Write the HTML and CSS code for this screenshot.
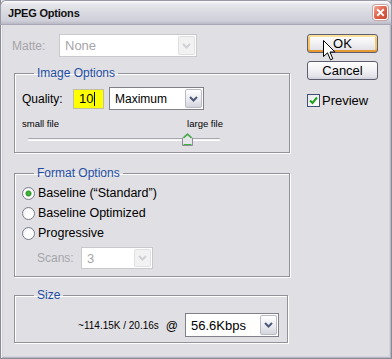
FILE: index.html
```html
<!DOCTYPE html>
<html lang="en">
<head>
    <meta charset="UTF-8">
    <title>JPEG Options</title>
    <link rel="stylesheet" href="styles.css">
</head>
<body>
    <div class="window">
        <div class="titlebar">
            <span class="title">JPEG Options</span>
            <span class="close-button">
                <svg width="15" height="15" viewBox="0 0 15 15"><path d="M4.5 4.5 L10.5 10.5 M10.5 4.5 L4.5 10.5" stroke="#fff" stroke-width="2.2" stroke-linecap="square"/></svg>
            </span>
        </div>

        <div class="dialog">
            <div class="main">
                <div class="matte-row">
                    <span class="label disabled">Matte:</span>
                    <div class="select select-matte disabled">
                        <span class="value">None</span>
                        <span class="drop"><svg width="9" height="6" viewBox="0 0 9 6"><path d="M1 1 L4.5 4.5 L8 1" fill="none" stroke="#cfd0d4" stroke-width="2"/></svg></span>
                    </div>
                </div>

                <fieldset class="group image-options">
                    <legend>Image Options</legend>
                    <div class="quality-row">
                        <span class="label">Quality:</span>
                        <div class="quality-input">10<span class="caret"></span></div>
                        <div class="select select-quality">
                            <span class="value">Maximum</span>
                            <span class="drop"><svg width="9" height="6" viewBox="0 0 9 6"><path d="M1 1 L4.5 4.5 L8 1" fill="none" stroke="#4a5a78" stroke-width="2"/></svg></span>
                        </div>
                    </div>
                    <div class="file-labels">
                        <span>small file</span>
                        <span>large file</span>
                    </div>
                    <div class="slider">
                        <div class="track"></div>
                        <svg class="thumb" width="11" height="13" viewBox="0 0 11 13">
                            <path d="M0.5 5 L5.5 0.5 L10.5 5 L10.5 12.5 L0.5 12.5 Z" fill="#e6e6ea" stroke="#8c8c9c"/>
                            <path d="M1.5 5 L5.5 1.5 L9.5 5" fill="none" stroke="#3fb43c" stroke-width="1.4"/>
                            <path d="M1.5 11.5 L9.5 11.5" stroke="#3fb43c" stroke-width="1"/>
                        </svg>
                    </div>
                </fieldset>

                <fieldset class="group format-options">
                    <legend>Format Options</legend>
                    <div class="radio-row">
                        <span class="radio checked"></span>
                        <span>Baseline (“Standard”)</span>
                    </div>
                    <div class="radio-row">
                        <span class="radio"></span>
                        <span>Baseline Optimized</span>
                    </div>
                    <div class="radio-row">
                        <span class="radio"></span>
                        <span>Progressive</span>
                    </div>
                    <div class="scans-row">
                        <span class="label disabled">Scans:</span>
                        <div class="select select-scans disabled">
                            <span class="value">3</span>
                            <span class="drop"><svg width="9" height="6" viewBox="0 0 9 6"><path d="M1 1 L4.5 4.5 L8 1" fill="none" stroke="#cfd0d4" stroke-width="2"/></svg></span>
                        </div>
                    </div>
                </fieldset>

                <fieldset class="group size-options">
                    <legend>Size</legend>
                    <div class="size-row">
                        <span class="size-text">~114.15K / 20.16s</span>
                        <span class="at">@</span>
                        <div class="select select-speed">
                            <span class="value">56.6Kbps</span>
                            <span class="drop"><svg width="9" height="6" viewBox="0 0 9 6"><path d="M1 1 L4.5 4.5 L8 1" fill="none" stroke="#4a5a78" stroke-width="2"/></svg></span>
                        </div>
                    </div>
                </fieldset>
            </div>

            <div class="side">
                <button class="button hover">OK</button>
                <button class="button">Cancel</button>
                <label class="check-row">
                    <span class="checkbox">
                        <svg width="11" height="11" viewBox="0 0 11 11"><path d="M2 5.5 L4.5 8 L9 2.5" fill="none" stroke="#21a121" stroke-width="2"/></svg>
                    </span>
                    <span>Preview</span>
                </label>
            </div>
        </div>

        <!-- mouse pointer over the OK button -->
        <svg class="cursor" width="13" height="21" viewBox="0 0 13 21">
            <path d="M0.5 0.5 L0.5 16.5 L4.5 12.8 L7.5 19.8 L9.8 18.8 L7 12 L12 12 Z" fill="#fff" stroke="#000" stroke-width="1"/>
        </svg>
    </div>
</body>
</html>
```

FILE: styles.css
```css
* {
    margin: 0;
    padding: 0;
    box-sizing: border-box;
}

body {
    font-family: 'Liberation Sans', Arial, sans-serif;
    font-size: 12px;
    color: #000;
    background: #e0dfe3;
}

.window {
    position: relative;
    width: 392px;
    height: 359px;
    background: #e0dfe3;
    border: 1px solid #8a8a96;
    border-top: none;
    box-shadow: inset 1px 0 0 #f4f4f6, inset -1px 0 0 #b8b8c2, inset 0 -1px 0 #b8b8c2, inset 2px 0 0 #d4d4dc, inset -2px 0 0 #d4d4dc, inset 0 -2px 0 #d4d4dc;
}

.titlebar {
    height: 25px;
    margin: 0 -1px;
    display: flex;
    align-items: center;
    justify-content: space-between;
    padding: 0 3px 0 7px;
    background: linear-gradient(#fbfbfc 0%, #e6e6ec 15%, #d9d9e1 50%, #d0d0da 85%, #babac6 100%);
    border: 1px solid #9a9aa6;
    border-bottom-color: #a8a8b4;
    border-radius: 6px 6px 0 0;
}

.title {
    font-weight: bold;
    font-size: 11px;
    letter-spacing: -0.2px;
    color: #111;
}

.close-button {
    width: 15px;
    height: 15px;
    border: 1px solid #fff;
    border-radius: 3px;
    background: linear-gradient(135deg, #f2a898 0%, #e0664f 45%, #c9452d 100%);
    box-shadow: 0 0 0 1px #c9a6a6;
    display: flex;
    align-items: center;
    justify-content: center;
}

.close-button svg {
    width: 13px;
    height: 13px;
}

.dialog {
    display: flex;
    padding: 9px 0 0 11px;
}

.main {
    width: 279px;
}

.side {
    margin-left: 16px;
    width: 71px;
    display: flex;
    flex-direction: column;
}

.label.disabled,
.disabled .value {
    color: #a6a5aa;
}

.matte-row {
    height: 23px;
    display: flex;
    align-items: center;
}

.matte-row .label {
    width: 47px;
}

/* combo boxes */
.select {
    display: flex;
    align-items: stretch;
    background: #fff;
    border: 1px solid #a5a6ad;
    padding: 1px;
}

.select .value {
    flex: 1;
    display: flex;
    align-items: center;
    padding-left: 4px;
}

.select .drop {
    width: 17px;
    display: flex;
    align-items: center;
    justify-content: center;
    border: 1px solid #b9bbc6;
    border-radius: 2px;
    background: linear-gradient(#ffffff, #e9e9ef 60%, #d3d4dd);
}

.select.disabled {
    border-color: #c9c9cc;
}

.select.disabled .drop {
    border-color: #e0e0e2;
    background: #f2f2f3;
}

.select-matte {
    width: 138px;
    height: 23px;
    font-size: 13px;
}

/* group boxes */
.group {
    margin: 0 0 0 2px;
    width: 276px;
    border: 1px solid #92929a;
    box-shadow: inset 1px 1px 0 #fff, 1px 1px 0 #fff;
    padding: 0 8px 0 7px;
}

.group legend {
    margin-left: 12px;
    padding: 0 3px;
    line-height: 15px;
    color: #1f4ea3;
    font-size: 12px;
}

.image-options {
    margin-top: 9px;
    padding-top: 6px;
    padding-bottom: 6px;
}

.quality-row {
    height: 23px;
    display: flex;
    align-items: center;
}

.quality-row .label {
    width: 51px;
}

.quality-input {
    width: 31px;
    height: 20px;
    background: #ffff00;
    border: 1px solid #c0c0a0;
    display: flex;
    align-items: center;
    padding-left: 5px;
    font-size: 13px;
}

.caret {
    width: 1px;
    height: 14px;
    background: #000;
    margin-left: 1px;
}

.select-quality {
    margin-left: 5px;
    width: 95px;
    height: 23px;
    border-color: #7f8088;
}

.file-labels {
    margin-top: 8px;
    display: flex;
    justify-content: space-between;
    width: 201px;
    font-size: 9.5px;
    line-height: 12px;
}

.slider {
    position: relative;
    margin: 2px 0 0 6px;
    width: 192px;
    height: 14px;
}

.track {
    position: absolute;
    left: 0;
    right: 0;
    top: 6px;
    height: 3px;
    border-top: 1px solid #a8a8b0;
    border-bottom: 1px solid #fff;
    background: #f4f4f6;
    border-radius: 1px;
}

.thumb {
    position: absolute;
    left: 154px;
    top: 1px;
}

.format-options {
    margin-top: 13px;
    padding-top: 2px;
    padding-bottom: 7px;
}

.radio-row {
    height: 20px;
    display: flex;
    align-items: center;
    gap: 3px;
    font-size: 12.5px;
}

.radio {
    width: 13px;
    height: 13px;
    border-radius: 50%;
    border: 1px solid #7b7f8c;
    background: radial-gradient(circle at 60% 60%, #ffffff 40%, #e4e4ea 100%);
}

.radio.checked {
    background: radial-gradient(circle, #4ec04a 0, #2b9a28 2.5px, #ffffff 3.5px, #e4e4ea 100%);
}

.scans-row {
    margin-top: 4px;
    padding-left: 15px;
    height: 22px;
    display: flex;
    align-items: center;
}

.scans-row .label {
    width: 44px;
}

.select-scans {
    width: 72px;
    height: 22px;
    font-size: 13px;
}

.size-options {
    margin-top: 11px;
    width: 274px;
    padding-top: 10px;
    padding-bottom: 5px;
}

.size-row {
    height: 24px;
    display: flex;
    align-items: center;
    justify-content: flex-end;
}

.size-text {
    font-size: 10px;
}

.at {
    margin: 2px 7px 0 7px;
    font-size: 12px;
}

.select-speed {
    width: 94px;
    height: 24px;
    font-size: 13px;
    border-color: #7f8088;
}

/* buttons */
.button {
    height: 19px;
    font-family: inherit;
    font-size: 13px;
    color: #000;
    border: 1px solid #5d5e6f;
    border-radius: 3px;
    background: linear-gradient(#ffffff, #f1f1f4 50%, #e2e2e8 85%, #cfd0d9);
}

.button.hover {
    box-shadow: inset 0 2px 0 #fce29a, inset 0 -2px 0 #e79a32, inset 2px 0 0 #f7c766, inset -2px 0 0 #f7c766;
}

.button + .button {
    margin-top: 8px;
}

.check-row {
    margin-top: 13px;
    height: 14px;
    display: flex;
    align-items: center;
    gap: 2px;
    font-size: 13px;
}

.checkbox {
    width: 13px;
    height: 13px;
    border: 1px solid #3f4f75;
    background: linear-gradient(135deg, #e8e8ec, #ffffff);
    display: flex;
    align-items: center;
    justify-content: center;
}

.cursor {
    position: absolute;
    left: 322px;
    top: 40px;
}
```
